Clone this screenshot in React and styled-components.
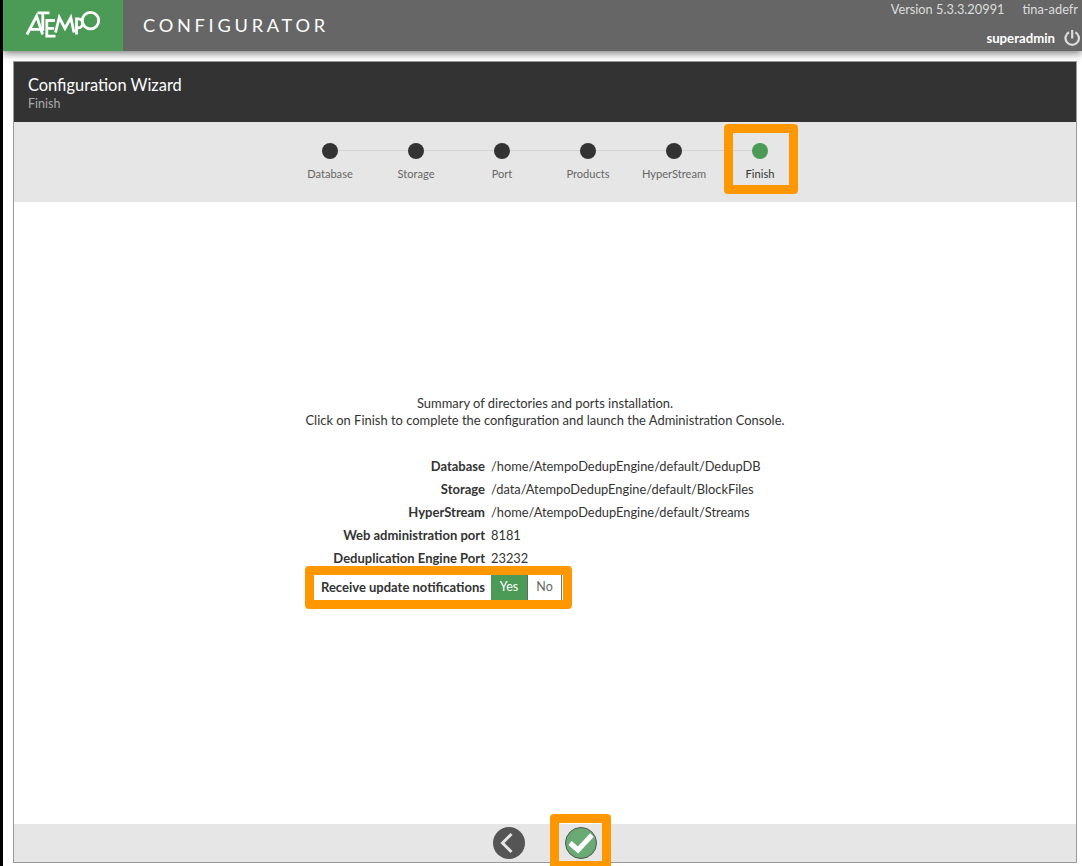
import React from "react";
import styled, { createGlobalStyle } from "styled-components";

const Global = createGlobalStyle`
  * { box-sizing: border-box; }
  body { margin: 0; background: #fff; font-family: Lato, "Liberation Sans", sans-serif; font-size: 12.93px; color: #333; overflow: hidden; }
`;

const Page = styled.div`
  height: 866px;
  border-left: 3px solid #000;
  display: flex;
  flex-direction: column;
  overflow: hidden;
`;

const Header = styled.header`
  height: 51px;
  flex: none;
  display: flex;
  background: #666;
  color: #fff;
  box-shadow: 0 2px 8px rgba(0, 0, 0, 0.55);
`;

const Brand = styled.div`
  width: 120px;
  background: #4b9b57;
  svg { display: block; }
`;

const AppName = styled.div`
  flex: 1;
  padding-left: 20px;
  font-size: 18.2px;
  line-height: 51px;
  letter-spacing: 3.75px;
`;

const Session = styled.div`
  display: flex;
  flex-direction: column;
  align-items: flex-end;
  padding-right: 1px;
`;

const SessionInfo = styled.div`
  display: flex;
  gap: 18px;
  padding-right: 3px;
  height: 19px;
  flex: none;
  font-size: 12.8px;
  line-height: 19px;
  color: #ddd;
`;

const UserRow = styled.div`
  display: flex;
  align-items: center;
  gap: 9px;
  height: 37px;
  flex: none;
  line-height: 20px;
  font-size: 13.2px;
  font-weight: 700;
`;

const Panel = styled.main`
  margin: 10px 5px 3px 10px;
  flex: 1;
  display: flex;
  flex-direction: column;
  border: 1px solid #999;
`;

const TitleBar = styled.div`
  height: 60px;
  background: #333;
  padding: 12px 14px 0;
`;

const Title = styled.h1`
  margin: 0;
  font-size: 16.4px;
  line-height: 21px;
  font-weight: 400;
  color: #fff;
`;

const Subtitle = styled.div`
  font-size: 12.5px;
  line-height: 17px;
  color: #aaa;
`;

const Stepper = styled.ol`
  list-style: none;
  margin: 0;
  padding: 21px 0 0;
  height: 80px;
  background: #e6e6e6;
  display: flex;
  justify-content: center;
`;

const StepItem = styled.li`
  width: 86px;
  position: relative;
  display: flex;
  flex-direction: column;
  align-items: center;
  font-size: 11.1px;
  line-height: 14px;
  gap: 8px;
  color: ${(p) => (p.$active ? "#333" : "#666")};
`;

const Track = styled.div`
  width: 100%;
  display: flex;
  align-items: center;
  &::before, &::after { content: ""; flex: 1; height: 1px; margin-bottom: 1px; background: #d2d2d2; }
  &::before { visibility: ${(p) => (p.$first ? "hidden" : "visible")}; }
  &::after { visibility: ${(p) => (p.$last ? "hidden" : "visible")}; }
`;

const Dot = styled.span`
  width: 16px;
  height: 16px;
  border-radius: 50%;
  background: ${(p) => (p.$active ? "#4b9b57" : "#333")};
`;

const Highlight = styled.span`
  position: absolute;
  border: 9px solid #ff9800;
  border-radius: 4px;
  pointer-events: none;
  left: ${(p) => p.$left}px;
  top: ${(p) => p.$top}px;
  width: ${(p) => p.$width}px;
  height: ${(p) => p.$height}px;
`;

const Content = styled.section`
  flex: 1;
  padding-top: 193px;
`;

const Intro = styled.p`
  margin: 0 0 26px;
  text-align: center;
  line-height: 17px;
`;

const Row = styled.div`
  display: grid;
  grid-template-columns: 471px auto;
  column-gap: 6px;
  height: 23px;
  line-height: 23px;
`;

const Label = styled.span`
  text-align: right;
  font-weight: 700;
  font-size: 13px;
`;

const Value = styled.span`
  font-size: 12.85px;
`;

const NotifyRow = styled(Row)`
  position: relative;
  margin-top: 3px;
  height: 26px;
  line-height: 28px;
`;

const Toggle = styled.div`
  display: flex;
  width: 71px;
  height: 27px;
  border-right: 1px solid #777;
  font-size: 12.5px;
  line-height: 27px;
  text-align: center;
`;

const Choice = styled.span`
  width: ${(p) => (p.$on ? 37 : 33)}px;
  border-right: ${(p) => (p.$on ? "1px solid #666" : "0")};
  background: ${(p) => (p.$on ? "#4b9b57" : "#fff")};
  color: ${(p) => (p.$on ? "#fff" : "#666")};
`;

const Footer = styled.footer`
  position: relative;
  height: 38px;
  background: #e6e6e6;
  display: flex;
  justify-content: center;
  gap: 40px;
  padding-top: 3px;
`;

const RoundButton = styled.button`
  width: 32px;
  height: 32px;
  padding: 0;
  border: 0;
  background: none;
  svg { display: block; }
`;

const steps = ["Database", "Storage", "Port", "Products", "HyperStream", "Finish"];

const summary = [
  ["Database", "/home/AtempoDedupEngine/default/DedupDB"],
  ["Storage", "/data/AtempoDedupEngine/default/BlockFiles"],
  ["HyperStream", "/home/AtempoDedupEngine/default/Streams"],
  ["Web administration port", "8181"],
  ["Deduplication Engine Port", "23232"],
];

const Logo = () => (
  <svg width="120" height="51" viewBox="0 0 120 51" fill="none" stroke="#fff" strokeWidth="2.8">
    <path d="M24 34.5 L33.6 16 L39.6 34.5 M28 29.3 H38" />
    <path d="M34.5 12.9 H46.5 M39.8 13 V31" />
    <path d="M52 20.5 H43.8 V36.2 H52.5 M44 28.3 H51" />
    <path d="M52.5 32.5 L56.3 17.5 L62 28.5 L67.8 17.5 L71 32.5" />
    <path d="M73.5 34.5 V18.8 H75.5 C81 18.8 81 27.8 75.5 27.8 H73.5" />
    <circle cx="87.5" cy="20.6" r="8.2" />
  </svg>
);

const PowerIcon = () => (
  <svg width="17" height="18" viewBox="0 0 17 18" fill="none" stroke="#ddd" strokeWidth="2.2">
    <path d="M5 3.2 A6.7 6.7 0 1 0 11.4 3.2 M8.2 1 V9.5" />
  </svg>
);

export default function App() {
  return (
    <>
      <Global />
      <Page>
        <Header>
          <Brand><Logo /></Brand>
          <AppName>CONFIGURATOR</AppName>
          <Session>
            <SessionInfo><span>Version 5.3.3.20991</span><span>tina-adefr</span></SessionInfo>
            <UserRow><span>superadmin</span><PowerIcon /></UserRow>
          </Session>
        </Header>
        <Panel>
          <TitleBar>
            <Title>Configuration Wizard</Title>
            <Subtitle>Finish</Subtitle>
          </TitleBar>
          <Stepper>
            {steps.map((name, i) => {
              const last = i === steps.length - 1;
              return (
                <StepItem key={name} $active={last}>
                  <Track $first={i === 0} $last={last}><Dot $active={last} /></Track>
                  <span>{name}</span>
                  {last && <Highlight $left={7} $top={-19} $width={74} $height={70} />}
                </StepItem>
              );
            })}
          </Stepper>
          <Content>
            <Intro>
              Summary of directories and ports installation.<br />
              Click on Finish to complete the configuration and launch the Administration Console.
            </Intro>
            {summary.map(([label, value]) => (
              <Row key={label}><Label>{label}</Label><Value>{value}</Value></Row>
            ))}
            <NotifyRow>
              <Label>Receive update notifications</Label>
              <Toggle><Choice $on>Yes</Choice><Choice>No</Choice></Toggle>
              <Highlight $left={291} $top={-7} $width={267} $height={43} />
            </NotifyRow>
          </Content>
          <Footer>
            <RoundButton aria-label="Back">
              <svg width="32" height="32" viewBox="0 0 32 32" fill="none">
                <circle cx="16" cy="16" r="16" fill="#555" />
                <path d="M18.5 7 L9.5 16 L18.5 25" stroke="#e6e6e6" strokeWidth="3" />
              </svg>
            </RoundButton>
            <RoundButton aria-label="Finish">
              <svg width="32" height="32" viewBox="0 0 32 32" fill="none">
                <circle cx="16" cy="16" r="15.5" fill="#6aaa74" stroke="#555" />
                <path d="M5 16 L13 23 L27 8" stroke="#fff" strokeWidth="5" />
              </svg>
            </RoundButton>
            <Highlight $left={536} $top={-10} $width={61} $height={56} />
          </Footer>
        </Panel>
      </Page>
    </>
  );
}
